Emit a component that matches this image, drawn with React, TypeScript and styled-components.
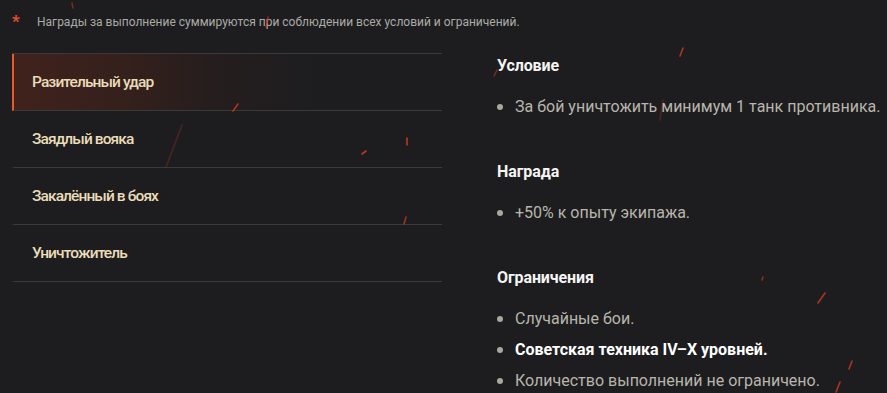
import React from "react";
import styled, { createGlobalStyle } from "styled-components";

const GlobalStyle = createGlobalStyle`
  html, body {
    margin: 0;
    padding: 0;
    background: #1d1d1f;
  }
  body {
    font-family: Roboto, "Liberation Sans", sans-serif;
    overflow: hidden;
  }
`;

const Page = styled.div`
  position: relative;
  width: 887px;
  height: 393px;
  background: #1d1d1f;
  overflow: hidden;
`;

const Note = styled.div`
  display: flex;
  align-items: center;
  gap: 16px;
  padding: 14px 0 0 12px;
  height: 16px;
`;

const Star = styled.span`
  color: #e8502a;
  font-size: 17px;
  font-weight: 700;
  line-height: 16px;
  width: 9px;
  margin-top: -3px;
`;

const NoteText = styled.span`
  color: #ababa6;
  font-size: 12px;
  line-height: 16px;
`;

const Main = styled.div`
  display: grid;
  grid-template-columns: 430px 1fr;
  column-gap: 55px;
  padding: 23px 0 0 12px;
`;

const Menu = styled.ul`
  list-style: none;
  margin: 0;
  padding: 0;
  border-top: 1px solid #3a3a3b;
`;

const MenuItem = styled.li<{ $active?: boolean }>`
  display: flex;
  align-items: center;
  box-sizing: border-box;
  height: 57px;
  border-bottom: 1px solid #3a3a3b;
  color: #eadcb8;
  font-size: 15.5px;
  font-weight: 500;
  letter-spacing: -0.9px;
  border-left: 2px solid ${(p) => (p.$active ? "#e85a2a" : "transparent")};
  padding-left: 18px;
  background: ${(p) =>
    p.$active
      ? "linear-gradient(90deg, #40221c 0%, #35201c 25%, rgba(42,30,29,0.7) 45%, rgba(29,29,31,0) 70%)"
      : "transparent"};
`;

const Details = styled.div`
  padding-top: 3px;
`;

const Section = styled.section`
  margin-bottom: 44px;
`;

const Heading = styled.h3`
  margin: 0 0 20px;
  color: #f5f5f3;
  font-size: 16px;
  line-height: 20px;
  font-weight: 700;
  letter-spacing: -0.1px;
`;

const List = styled.ul`
  list-style: none;
  margin: 0;
  padding: 0;
  display: flex;
  flex-direction: column;
  gap: 9px;
`;

const Item = styled.li<{ $strong?: boolean }>`
  display: flex;
  align-items: center;
  gap: 12px;
  line-height: 22px;
  font-size: 16px;
  color: ${(p) => (p.$strong ? "#ffffff" : "#b8b6ac")};
  font-weight: ${(p) => (p.$strong ? 700 : 400)};
  &::before {
    content: "";
    width: 6px;
    height: 6px;
    border-radius: 50%;
    background: #a9a89c;
    flex: none;
  }
`;

const Sparks = styled.svg`
  position: absolute;
  inset: 0;
  pointer-events: none;
`;

const sparks: [number, number, number, number, number][] = [
  [72, 3, 73, 8, 0.5],
  [268, 17, 266, 27, 0.6],
  [238, 104, 233, 111, 0.8],
  [182, 125, 166, 167, 0.25],
  [366, 151, 362, 154, 0.9],
  [407, 138, 407, 145, 0.9],
  [406, 217, 404, 224, 0.7],
  [683, 48, 680, 56, 0.8],
  [663, 100, 660, 120, 0.25],
  [497, 70, 494, 76, 0.5],
  [825, 293, 818, 303, 0.8],
  [852, 361, 849, 369, 0.8],
  [840, 382, 836, 392, 0.8],
  [763, 277, 762, 280, 0.6],
];

const App: React.FC = () => {
  return (
    <Page>
      <GlobalStyle />
      <Note>
        <Star>*</Star>
        <NoteText>
          Награды за выполнение суммируются при соблюдении всех условий и ограничений.
        </NoteText>
      </Note>
      <Main>
        <Menu>
          <MenuItem $active>Разительный удар</MenuItem>
          <MenuItem>Заядлый вояка</MenuItem>
          <MenuItem>Закалённый в боях</MenuItem>
          <MenuItem>Уничтожитель</MenuItem>
        </Menu>
        <Details>
          <Section>
            <Heading>Условие</Heading>
            <List>
              <Item>За бой уничтожить минимум 1 танк противника.</Item>
            </List>
          </Section>
          <Section>
            <Heading>Награда</Heading>
            <List>
              <Item>+50% к опыту экипажа.</Item>
            </List>
          </Section>
          <Section>
            <Heading>Ограничения</Heading>
            <List>
              <Item>Случайные бои.</Item>
              <Item $strong>Советская техника IV–X уровней.</Item>
              <Item>Количество выполнений не ограничено.</Item>
            </List>
          </Section>
        </Details>
      </Main>
      <Sparks width="887" height="393" viewBox="0 0 887 393">
        {sparks.map(([x1, y1, x2, y2, o], i) => (
          <line
            key={i}
            x1={x1}
            y1={y1}
            x2={x2}
            y2={y2}
            stroke="#d33a22"
            strokeWidth={1.6}
            strokeLinecap="round"
            opacity={o}
          />
        ))}
      </Sparks>
    </Page>
  );
};

export default App;
